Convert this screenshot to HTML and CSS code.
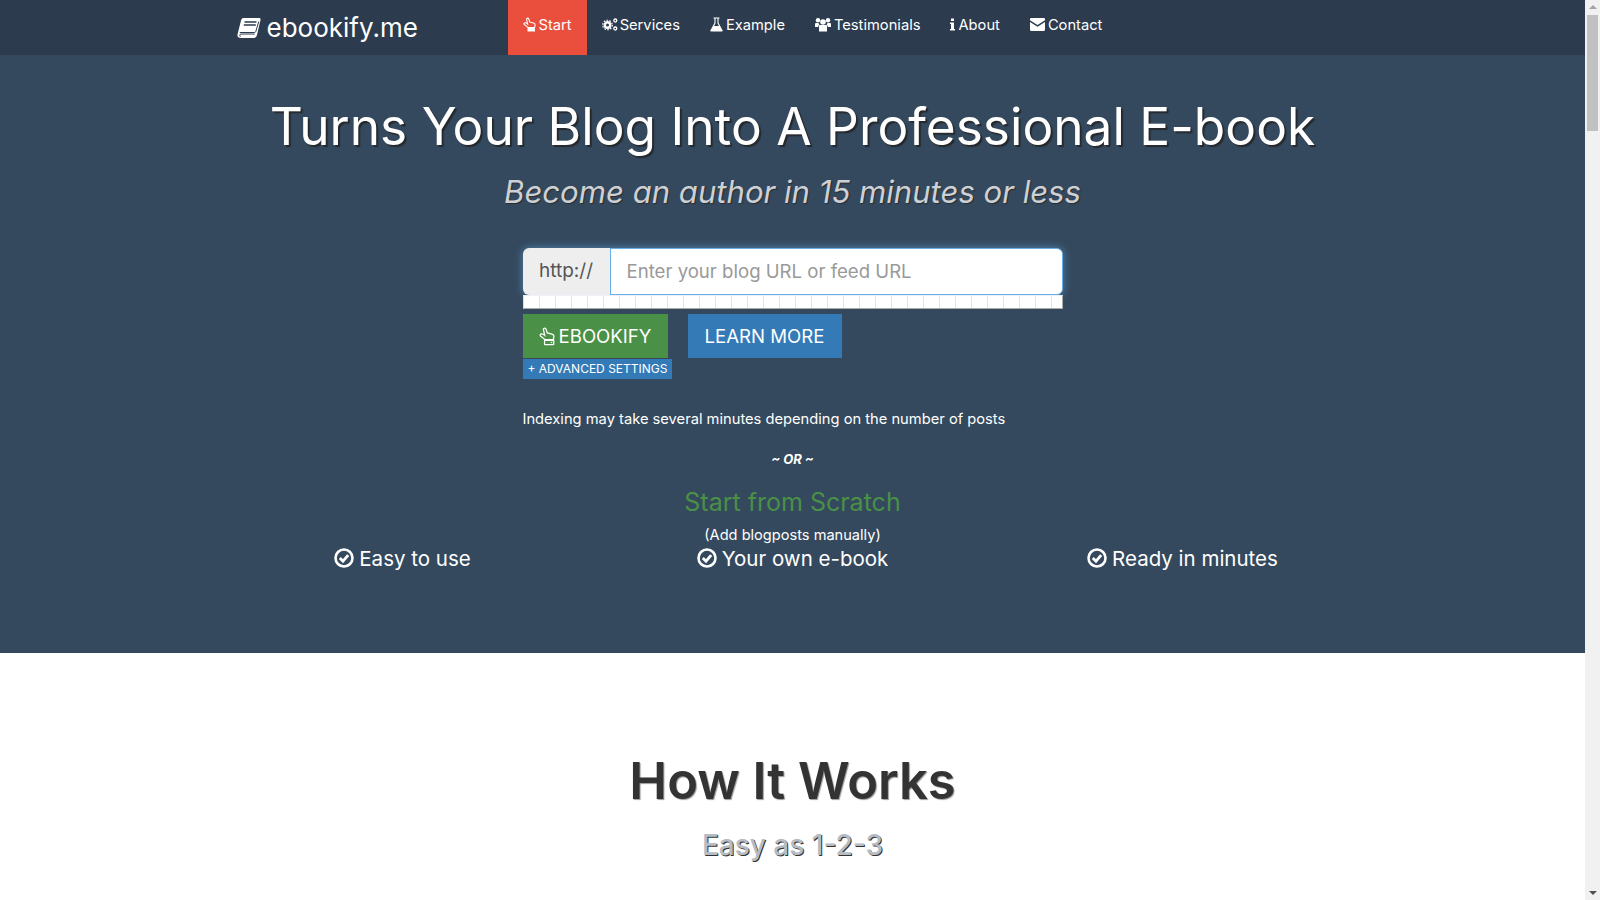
FILE: index.html
```html
<!DOCTYPE html>
<html lang="en">
<head>
  <meta charset="UTF-8" />
  <title>ebookify.me</title>
  <link rel="stylesheet" href="styles.css">
</head>
<body>
  <div class="page">
    <!-- Navbar -->
    <nav class="navbar">
      <div class="navbar-inner">
        <a class="brand">
          <svg class="brand-icon" viewBox="0 0 24 22"><path d="M6 1h16q2 0 1.500 2L20 18q-.5 3-3.500 3H4Q0 21 .5 17.500q.2-1 .5-2L4 3.500Q4.500 1 6 1z" fill="#fff"/><path d="M7.500 5h12M6.800 8h12" stroke="#2c3b4d" stroke-width="1.300"/><path d="M2.800 15.500h14.500q1.200 0 1.500-1L21.800 4.500M3.300 19.600q-1.300-1.500.3-2.600h14" fill="none" stroke="#2c3b4d" stroke-width="1"/></svg>
          ebookify.me
        </a>
        <ul class="nav">
          <li class="active"><a><svg class="ico ico-hand" viewBox="0 0 13 15"><path d="M3.500 1.800q1.300-1.300 2.200 0L6.700 5l3.800 1q1.800.5 1.600 2.200l-.5 2.300H5L1.200 7.500q-.7-1.200.6-1.700 1-.3 2.800 1.200z" fill="none" stroke="#fff" stroke-width="1.100"/><rect x="4.500" y="11" width="7.500" height="3.500" rx=".5" fill="#fff"/></svg>Start</a></li>
          <li><a><svg class="ico ico-gears" viewBox="0 0 16 14"><circle cx="5.500" cy="7.500" r="2.700" fill="none" stroke="#fff" stroke-width="2.400"/><circle cx="5.500" cy="7.500" r="4.800" fill="none" stroke="#fff" stroke-width="1.100" stroke-dasharray="1.700 1.300"/><circle cx="13.300" cy="3" r="1.500" fill="none" stroke="#fff" stroke-width="1.300"/><circle cx="13.300" cy="11" r="1.500" fill="none" stroke="#fff" stroke-width="1.300"/></svg>Services</a></li>
          <li><a><svg class="ico ico-flask" viewBox="0 0 13 15"><path d="M3.500 1h6M5 1v5L1 13.500h11L8 6V1" fill="none" stroke="#fff" stroke-width="1.100"/><path d="M3.500 9h6l3 5.500H.5z" fill="#fff"/></svg>Example</a></li>
          <li><a><svg class="ico ico-users" viewBox="0 0 16 14"><circle cx="8" cy="4.500" r="2.800" fill="#fff"/><circle cx="3" cy="2.800" r="2.200" fill="#fff"/><circle cx="13" cy="2.800" r="2.200" fill="#fff"/><path d="M4 8.500q0-1 1-1h6q1 0 1 1V14H4zM0 6.500q0-1 1-1h2.500q.3 1 1 1.500-1.200.5-1.300 2.500H0zM16 6.500q0-1-1-1h-2.500q-.3 1-1 1.500 1.200.5 1.300 2.500H16z" fill="#fff"/></svg>Testimonials</a></li>
          <li><a><svg class="ico ico-info" viewBox="0 0 5 14"><path d="M1 1h3v2.500H1zM0 5h4v6.500h1V13H0v-1.500h1V6.500H0z" fill="#fff"/></svg>About</a></li>
          <li><a><svg class="ico ico-mail" viewBox="0 0 14 12"><path d="M1 0h12q1 0 1 1v1L7 6.500 0 2V1q0-1 1-1zM0 3.700l7 4.500 7-4.500V11q0 1-1 1H1q-1 0-1-1z" fill="#fff"/></svg>Contact</a></li>
        </ul>
      </div>
    </nav>

    <!-- Hero -->
    <header class="hero">
      <h1>Turns Your Blog Into A Professional E-book</h1>
      <p class="lead">Become an author in 15 minutes or less</p>

      <div class="form-col">
        <div class="input-group">
          <span class="addon">http://</span>
          <input class="url" type="text" placeholder="Enter your blog URL or feed URL" />
        </div>
        <div class="progress">
          <i></i><i></i><i></i><i></i><i></i><i></i><i></i><i></i><i></i><i></i><i></i>
          <i></i><i></i><i></i><i></i><i></i><i></i><i></i><i></i><i></i><i></i><i></i>
          <i></i><i></i><i></i><i></i><i></i><i></i><i></i><i></i><i></i><i></i><i></i>
        </div>
        <div class="buttons">
          <a class="btn btn-green"><svg class="btn-ico" viewBox="0 0 13 15"><path d="M3.500 1.800q1.300-1.300 2.200 0L6.700 5l3.800 1q1.800.5 1.600 2.200l-.5 2.300H5L1.200 7.500q-.7-1.200.6-1.700 1-.3 2.800 1.200z" fill="none" stroke="#fff" stroke-width="1"/><path d="M4.500 11h7.500v3q0 .5-.5.5H5q-.5 0-.5-.5z" fill="none" stroke="#fff" stroke-width="1"/><rect x="9.500" y="12.300" width="1.300" height="1" fill="#fff"/></svg>EBOOKIFY</a>
          <a class="btn btn-blue">LEARN MORE</a>
        </div>
        <a class="advanced">+ ADVANCED SETTINGS</a>
        <p class="note">Indexing may take several minutes depending on the number of posts</p>
      </div>

      <p class="or">~ OR ~</p>
      <a class="scratch">Start from Scratch</a>
      <p class="manual">(Add blogposts manually)</p>

      <div class="features">
        <div class="feature"><svg class="check" viewBox="0 0 20 20"><circle cx="10" cy="10" r="8.500" fill="none" stroke="#fff" stroke-width="2.600"/><path d="M5.800 10l3.200 3.200 5.200-6" fill="none" stroke="#fff" stroke-width="2.800"/></svg>Easy to use</div>
        <div class="feature"><svg class="check" viewBox="0 0 20 20"><circle cx="10" cy="10" r="8.500" fill="none" stroke="#fff" stroke-width="2.600"/><path d="M5.800 10l3.200 3.200 5.200-6" fill="none" stroke="#fff" stroke-width="2.800"/></svg>Your own e-book</div>
        <div class="feature"><svg class="check" viewBox="0 0 20 20"><circle cx="10" cy="10" r="8.500" fill="none" stroke="#fff" stroke-width="2.600"/><path d="M5.800 10l3.200 3.200 5.200-6" fill="none" stroke="#fff" stroke-width="2.800"/></svg>Ready in minutes</div>
      </div>
    </header>

    <!-- How it works -->
    <section class="how">
      <h2>How It Works</h2>
      <h3>Easy as 1-2-3</h3>
    </section>
  </div>

  <div class="scrollbar">
    <span class="arrow arrow-up"></span>
    <span class="thumb"></span>
    <span class="arrow arrow-down"></span>
  </div>
</body>
</html>
```

FILE: styles.css
```css
* { margin: 0; padding: 0; box-sizing: border-box; }
html, body { height: 100%; overflow: hidden; }
body {
  display: flex;
  font-family: Inter, "Open Sans", sans-serif;
  color: #fff;
  background: #fff;
}
a { color: inherit; text-decoration: none; }
.page { flex: 1; height: 900px; overflow: hidden; }

/* navbar */
.navbar { background: #2c3b4d; height: 55px; }
.navbar-inner { width: 1170px; margin: 0 auto; display: flex; padding-left: 30px; }
.brand {
  width: 270px;
  display: flex;
  align-items: center;
  font-size: 26px;
  height: 55px;
  white-space: nowrap;
}
.brand-icon { width: 24px; height: 22px; margin-right: 6px; margin-left: -1px; }
.nav { display: flex; list-style: none; }
.nav a {
  display: flex;
  align-items: center;
  height: 49px;
  padding: 0 15px;
  font-size: 14.700px;
}
.nav li.active { background: #ea4f3e; height: 55px; }
.ico { height: 15px; margin-right: 3px; }
.ico-hand { width: 13px; margin-right: 3px; }
.ico-gears { width: 16px; margin-right: 2px; }
.ico-flask { width: 13px; }
.ico-users { width: 16px; }
.ico-info { width: 5px; }
.ico-mail { width: 15px; }

/* hero */
.hero { background: #34495e; height: 598px; text-align: center; padding-top: 38px; }
.hero h1 {
  font-size: 51.400px;
  font-weight: 400;
  line-height: 66px;
  text-shadow: 2px 2px 1px #26292d;
}
.lead {
  font-size: 31.100px;
  font-style: italic;
  font-weight: 400;
  line-height: 40px;
  margin-top: 13px;
  color: #cdd0d4;
  text-shadow: 1px 1px 1px #2a2d31;
}
.form-col { width: 540px; margin: 36px auto 0; text-align: left; }
.input-group {
  display: flex;
  height: 47px;
  border-radius: 6px;
  box-shadow: 0 0 8px rgba(102, 175, 233, .6);
}
.addon {
  width: 87px;
  background: #eee;
  color: #555;
  font-size: 19px;
  display: flex;
  align-items: center;
  justify-content: center;
  padding-bottom: 2px;
  border-radius: 6px 0 0 6px;
}
.url {
  flex: 1;
  border: 1px solid #66afe9;
  border-radius: 0 6px 6px 0;
  padding: 0 16px 2px;
  font-family: inherit;
  font-size: 18.600px;
  outline: none;
}
.url::placeholder { color: #999; }
.progress {
  display: flex;
  height: 14px;
  background: #fff;
  border: 1px solid #aaa;
  border-top-color: #eef2f8;
  border-left-color: #ddd;
}
.progress i { width: 16px; border-right: 1px solid #e4e4e4; }
.buttons { display: flex; gap: 20px; margin-top: 5px; }
.btn {
  height: 44px;
  display: flex;
  align-items: center;
  justify-content: center;
  font-size: 18.600px;
  white-space: nowrap;
}
.btn-green { width: 145px; background: #4a9047; }
.btn-blue { width: 154px; background: #337ab7; }
.btn-ico { width: 16px; height: 20px; margin-right: 4px; }
.advanced {
  display: block;
  width: 149px;
  height: 20px;
  margin-top: 1px;
  background: #337ab7;
  font-size: 12px;
  line-height: 20px;
  padding-left: 5px;
  white-space: nowrap;
}
.note { font-size: 14.700px; line-height: 21px; margin-top: 30px; }
.or { font-size: 13px; font-weight: 700; font-style: italic; line-height: 20px; margin-top: 19px; }
.scratch { display: block; color: #4a9047; font-size: 25px; line-height: 34px; margin-top: 16px; }
.manual { font-size: 14.600px; line-height: 20px; margin-top: 6px; }
.features { width: 1170px; margin: 1px auto 0; display: grid; grid-template-columns: repeat(3, 1fr); }
.feature {
  display: flex;
  align-items: center;
  justify-content: center;
  font-size: 20.500px;
  line-height: 26px;
}
.check { width: 20px; height: 20px; margin-right: 5px; margin-top: -3px; }

/* how it works */
.how { text-align: center; color: #333; padding-top: 95px; }
.how h2 { font-size: 50.700px; font-weight: 600; line-height: 66px; text-shadow: 1px 1px 1px #999; }
.how h3 {
  font-size: 28px;
  font-weight: 500;
  line-height: 40px;
  margin-top: 11px;
  color: #b6bcc4;
  text-shadow: 1px 1px 0 #333;
}

/* scrollbar */
.scrollbar {
  width: 15px;
  height: 900px;
  background: #f1f1f1;
  display: flex;
  flex-direction: column;
  align-items: center;
  position: relative;
}
.arrow { position: absolute; width: 0; height: 0; border-left: 4px solid transparent; border-right: 4px solid transparent; }
.arrow-up { top: 5px; border-bottom: 4px solid #a3a3a3; }
.arrow-down { bottom: 5px; border-top: 4px solid #505050; }
.thumb { width: 11px; height: 116px; margin-top: 15px; background: #c1c1c1; }
```
